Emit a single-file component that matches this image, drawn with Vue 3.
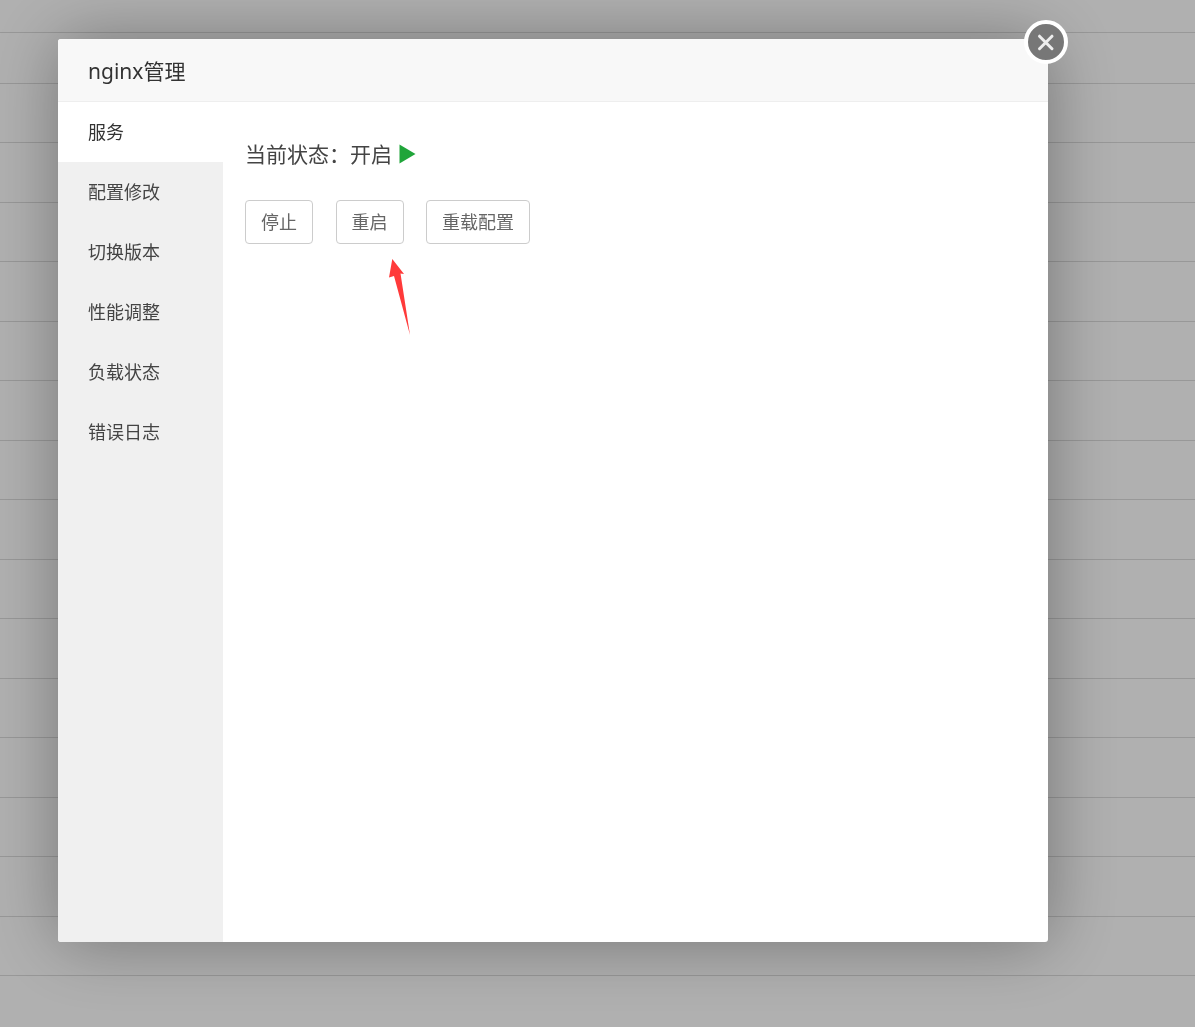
<script setup>
const rowHeights = [33, 50.9, ...Array(16).fill(59.5)]
const menu = ['服务', '配置修改', '切换版本', '性能调整', '负载状态', '错误日志']
const actions = ['停止', '重启', '重载配置']
</script>

<template>
  <div class="page">
    <div v-for="(h, i) in rowHeights" :key="i" class="row" :style="{ height: h + 'px' }"></div>
  </div>
  <div class="shade"></div>
  <section class="modal">
    <header class="title">nginx管理</header>
    <div class="body">
      <nav class="side">
        <div v-for="(m, i) in menu" :key="m" class="item" :class="{ active: i === 0 }">{{ m }}</div>
      </nav>
      <main class="content">
        <p class="status">{{ '当前状态\uFF1A开启' }}
          <svg class="play" width="17" height="20" viewBox="0 0 17 20"><path d="M0.5 0.5 L16.5 10 L0.5 19.5 Z" fill="#20a53a" /></svg>
        </p>
        <div class="actions">
          <button v-for="a in actions" :key="a" class="btn">{{ a }}</button>
        </div>
      </main>
    </div>
    <button class="close" aria-label="关闭">
      <svg width="20" height="20" viewBox="0 0 20 20"><path d="M3.5 4.2 L16 16.7 M16 4.2 L3.5 16.7" stroke="#eeeeee" stroke-width="3" stroke-linecap="round" fill="none" /></svg>
    </button>
  </section>
  <svg class="arrow" width="26" height="80" viewBox="0 0 26 80">
    <path d="M6.3 2 L18 17 L14.5 16.5 L24 78 L8 19 L3 20.5 Z" fill="#ff3a3a" />
  </svg>
</template>

<style>
html, body { margin: 0; background: #fff; overflow: hidden; }
</style>

<style scoped>
.page { height: 1027px; overflow: hidden; }
.row { box-sizing: border-box; border-bottom: 1px solid #dcdcdc; }
.shade { position: fixed; inset: 0; background: rgba(0, 0, 0, 0.31); }
.modal {
  position: fixed; left: 58px; top: 39px; width: 990px; height: 903px;
  display: flex; flex-direction: column;
  background: #fff; border-radius: 3px;
  box-shadow: 1px 1px 70px rgba(0, 0, 0, 0.34);
  font-family: "Noto Sans", "Noto Sans CJK SC", sans-serif;
}
.title {
  box-sizing: border-box; height: 63px; padding-left: 30px;
  line-height: 65px; font-size: 21px; color: #333;
  background: #f8f8f8; border-bottom: 1px solid #eee; border-radius: 3px 3px 0 0;
}
.body { flex: 1; display: flex; min-height: 0; }
.side { width: 165px; background: #f0f0f0; border-radius: 0 0 0 3px; }
.item { height: 60px; line-height: 61px; padding-left: 30px; font-size: 18px; color: #444; }
.item.active { line-height: 60px; background: #fff; color: #333; }
.content { flex: 1; padding: 35px 22px; }
.status { margin: 0; height: 34px; display: flex; align-items: center; font-size: 21px; line-height: 34px; color: #444; gap: 7px; }
.play { flex: none; }
.actions { display: flex; gap: 22.5px; margin-top: 29px; }
.btn {
  height: 44px; padding: 0 15px 3px; box-sizing: border-box;
  border: 1px solid #ccc; border-radius: 4px; background: #fff;
  font: inherit; font-size: 18px; color: #666;
}
.close {
  position: absolute; top: -19px; right: -19.5px; width: 44px; height: 44px;
  box-sizing: border-box; padding: 0; display: flex; align-items: center; justify-content: center;
  border: 4px solid #fff; border-radius: 50%; background: #777;
}
.arrow { position: fixed; left: 386px; top: 257px; }
</style>
